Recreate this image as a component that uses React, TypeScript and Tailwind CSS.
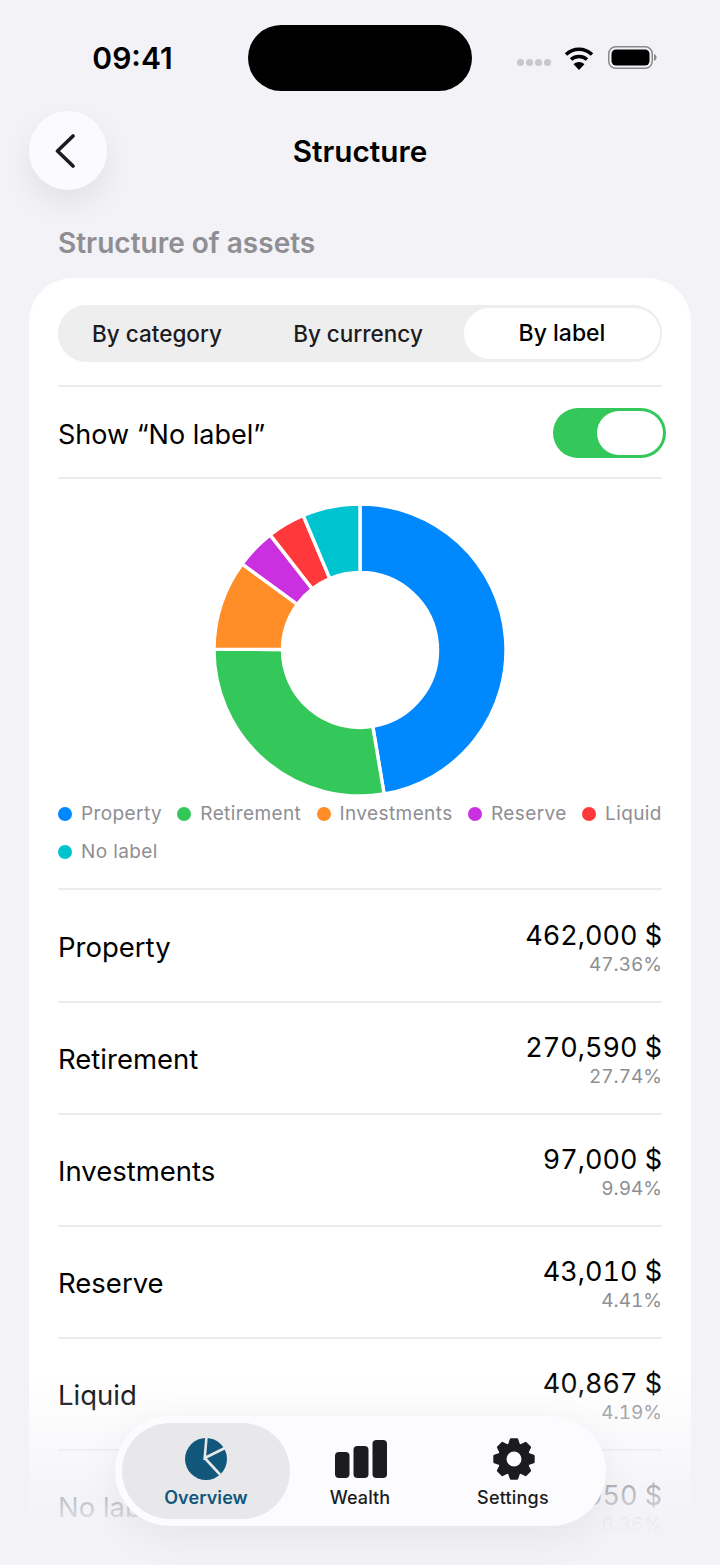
import React from "react";

const slices = [
  { name: "Property", value: "462,000 $", pct: 47.36, color: "#0088ff" },
  { name: "Retirement", value: "270,590 $", pct: 27.74, color: "#34c759" },
  { name: "Investments", value: "97,000 $", pct: 9.94, color: "#ff8d28" },
  { name: "Reserve", value: "43,010 $", pct: 4.41, color: "#cb30e0" },
  { name: "Liquid", value: "40,867 $", pct: 4.19, color: "#ff383c" },
  { name: "No label", value: "62,050 $", pct: 6.36, color: "#00c3d0" },
];

function polar(cx: number, cy: number, r: number, a: number) {
  const t = (a * Math.PI) / 180;
  return [cx + r * Math.sin(t), cy - r * Math.cos(t)];
}

function Donut() {
  let start = 0;
  const cx = 146;
  const cy = 146;
  const R = 146;
  const r = 77.5;
  return (
    <svg width="292" height="292" viewBox="0 0 292 292">
      {slices.map((s) => {
        const end = start + (s.pct / 100) * 360;
        const [x1, y1] = polar(cx, cy, R, start);
        const [x2, y2] = polar(cx, cy, R, end);
        const [x3, y3] = polar(cx, cy, r, end);
        const [x4, y4] = polar(cx, cy, r, start);
        const large = end - start > 180 ? 1 : 0;
        const d = `M${x1} ${y1}A${R} ${R} 0 ${large} 1 ${x2} ${y2}L${x3} ${y3}A${r} ${r} 0 ${large} 0 ${x4} ${y4}Z`;
        start = end;
        return <path key={s.name} d={d} fill={s.color} stroke="#fff" strokeWidth="3.4" />;
      })}
    </svg>
  );
}

function Row({ s }: { s: (typeof slices)[number] }) {
  return (
    <div className="flex h-[112px] items-center justify-between border-b-2 border-[#ececee] pt-[2px]">
      <span className="text-[27.5px] leading-[34px] text-black">{s.name}</span>
      <div className="mt-[2px] flex flex-col items-end">
        <span className="text-[27px] leading-[34px] text-black tabular-nums">{s.value}</span>
        <span className="text-[19px] leading-[24px] text-[#8e8e93] tabular-nums">{s.pct.toFixed(2)}%</span>
      </div>
    </div>
  );
}

function Wifi() {
  return (
    <svg width="30" height="24" viewBox="0 0 30 24" fill="none">
      <path d="M2 8.5C9.5 1.5 20.5 1.5 28 8.5" stroke="#000" strokeWidth="3.6" />
      <path d="M7 13.5C11.5 9.5 18.5 9.5 23 13.5" stroke="#000" strokeWidth="3.6" />
      <path d="M15 24L9.6 18.2C12.6 15.4 17.4 15.4 20.4 18.2Z" fill="#000" />
    </svg>
  );
}

function Battery() {
  return (
    <svg width="49" height="23" viewBox="0 0 49 23" fill="none">
      <rect x="0.75" y="0.75" width="43.5" height="21.5" rx="7" stroke="#8a8a8e" strokeWidth="1.5" />
      <rect x="3.5" y="3.5" width="38" height="16" rx="4.5" fill="#000" />
      <path d="M46 8C47.8 8.7 48.6 10 48.6 11.5C48.6 13 47.8 14.3 46 15Z" fill="#8a8a8e" />
    </svg>
  );
}

function PieIcon() {
  return (
    <svg width="44" height="44" viewBox="0 0 44 44">
      <circle cx="22" cy="22" r="21" fill="#11577c" />
      <path d="M22.5 0L20.7 21L42 10.5M20.7 21L36 37.5" fill="none" stroke="#e8e8ea" strokeWidth="2.6" />
    </svg>
  );
}

function BarsIcon() {
  return (
    <svg width="52" height="38" viewBox="0 0 52 38" fill="#1c1c1e">
      <rect x="0" y="12" width="14.5" height="26" rx="4" />
      <rect x="18.5" y="6" width="15" height="32" rx="4" />
      <rect x="37.5" y="0" width="14.5" height="38" rx="4" />
    </svg>
  );
}

function GearIcon() {
  const teeth = [0, 45, 90, 135, 180, 225, 270, 315];
  return (
    <svg width="44" height="44" viewBox="0 0 44 44">
      {teeth.map((a) => (
        <path
          key={a}
          d="M19 2.5H25L27.5 10H16.5Z"
          fill="#1c1c1e"
          stroke="#1c1c1e"
          strokeWidth="2.4"
          strokeLinejoin="round"
          transform={`rotate(${a} 22 22)`}
        />
      ))}
      <circle cx="22" cy="22" r="16" fill="#1c1c1e" />
      <circle cx="22" cy="22" r="7.5" fill="#fcfcfe" />
    </svg>
  );
}

export default function App() {
  return (
    <div
      className="relative flex h-[1565px] w-[720px] flex-col overflow-hidden bg-[#f2f2f7]"
      style={{ fontFamily: "Inter, 'Noto Sans', sans-serif" }}
    >
      <div className="mt-[25px] flex h-[66px] shrink-0">
        <div className="flex w-[248px] items-center justify-center pl-[17px]">
          <span className="text-[30px] leading-none font-semibold text-black">09:41</span>
        </div>
        <div className="h-[66px] w-[224px] rounded-[33px] bg-black" />
        <div className="flex flex-1 items-center pl-[45px]">
          <div className="mt-[8px] flex gap-[2px]">
            {[0, 1, 2, 3].map((i) => (
              <span key={i} className="h-[7px] w-[7px] rounded-full bg-[#c7c7cc]" />
            ))}
          </div>
          <div className="ml-[13px] -mt-[1px]"><Wifi /></div>
          <div className="ml-[14px] -mt-[1px]"><Battery /></div>
        </div>
      </div>

      <div className="mt-[20px] grid h-[79px] shrink-0 grid-cols-[1fr_auto_1fr] items-center px-[29px]">
        <div className="flex h-[79px] w-[78px] items-center justify-center rounded-full bg-[#fbfbfd] pr-[6px] shadow-[0_14px_30px_rgba(0,0,0,0.07)]">
          <svg width="22" height="34" viewBox="0 0 22 34" fill="none">
            <path d="M19 2L3.5 17L19 32" stroke="#1c1c1e" strokeWidth="3.6" strokeLinecap="round" strokeLinejoin="round" />
          </svg>
        </div>
        <span className="pt-[2px] text-[29.7px] leading-none font-semibold text-black">Structure</span>
        <div />
      </div>

      <div className="mt-[35px] h-[36px] shrink-0 px-[58px] text-[28px] leading-[36px] font-semibold text-[#8e8e93]">
        Structure of assets
      </div>

      <div className="mx-[29px] mt-[17px] flex-1 rounded-t-[44px] bg-white px-[29px] pt-[27px]">
        <div className="flex h-[57px] items-center rounded-full bg-[#eeeeef] pr-[2px]">
          <div className="flex flex-1 justify-center pr-[3px] text-[22.5px] font-medium text-[#1c1c1e]">By category</div>
          <div className="flex flex-1 justify-center pr-[7px] text-[22.5px] font-medium text-[#1c1c1e]">By currency</div>
          <div className="flex h-[51px] w-[196px] items-center justify-center rounded-full bg-white text-[23px] font-medium text-black">
            By label
          </div>
        </div>

        <div className="mt-[23px] flex h-[94px] items-center justify-between border-y-2 border-[#ececee]">
          <span className="pt-[6px] text-[27px] text-black">Show “No label”</span>
          <div className="-mr-[4px] mt-[2px] flex h-[50px] w-[113px] items-center justify-end rounded-full bg-[#34c759] pr-[3px]">
            <div className="h-[44px] w-[66px] rounded-full bg-white" />
          </div>
        </div>

        <div className="mt-[25px] flex justify-center">
          <Donut />
        </div>

        <div className="-mt-[1px] flex flex-wrap gap-x-[15.3px]">
          {slices.map((s) => (
            <div key={s.name} className="flex h-[38px] items-center gap-[9px]">
              <span className="h-[14px] w-[14px] rounded-full" style={{ backgroundColor: s.color }} />
              <span className="text-[19px] tracking-[0.4px] text-[#8e8e93]">{s.name}</span>
            </div>
          ))}
        </div>

        <div className="mt-[17px] border-t-2 border-[#ececee] pt-[1px]">
          {slices.map((s) => (
            <Row key={s.name} s={s} />
          ))}
        </div>
      </div>

      <div className="absolute inset-x-0 bottom-0 h-[190px] bg-gradient-to-b from-[#f2f2f7]/0 via-[#f2f2f7]/75 via-60% to-[#f2f2f7] to-85%" />

      <div className="absolute bottom-[39px] left-[115px] flex h-[110px] w-[491px] items-center rounded-[55px] bg-[#fcfcfe] pl-[7px] shadow-[0_10px_40px_rgba(0,0,0,0.06)]">
        <div className="flex h-[96px] w-[168px] flex-col items-center justify-center rounded-[48px] bg-[#e8e8ea] pt-[4px]">
          <PieIcon />
          <span className="mt-[5px] text-[18px] tracking-[0.1px] leading-[24px] font-semibold text-[#11577c]">Overview</span>
        </div>
        <div className="flex w-[140px] flex-col items-center pt-[4px]">
          <div className="flex h-[41px] items-end pl-[2px]"><BarsIcon /></div>
          <span className="mt-[8px] text-[18px] tracking-[0.1px] leading-[24px] font-medium text-[#1c1c1e]">Wealth</span>
        </div>
        <div className="ml-[13px] flex w-[140px] flex-col items-center pt-[4px]">
          <div className="pl-[1px]"><GearIcon /></div>
          <span className="mt-[5px] text-[18px] tracking-[0.2px] leading-[24px] font-medium text-[#1c1c1e]">Settings</span>
        </div>
      </div>
    </div>
  );
}
